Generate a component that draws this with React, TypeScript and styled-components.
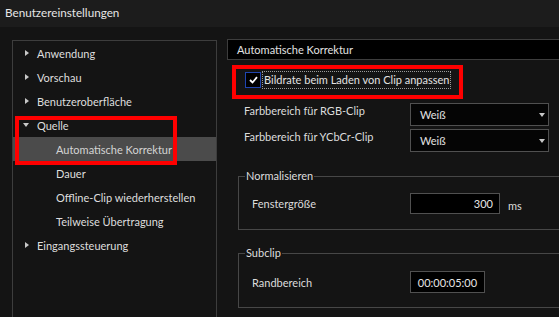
import React from 'react';
import styled, { createGlobalStyle } from 'styled-components';

const Global = createGlobalStyle`
  html, body { margin: 0; padding: 0; background: #141414; }
  body {
    font-family: Lato, "Noto Sans", sans-serif;
    font-size: 11px;
    color: #dcdcdc;
    overflow: hidden;
  }
  * { box-sizing: border-box; }
`;

const Window = styled.div`
  width: 559px;
  height: 317px;
  display: flex;
  flex-direction: column;
  overflow: hidden;
  background: #141414;
`;

const TitleBar = styled.div`
  height: 27px;
  flex: none;
  background: #1c1c1c;
  display: flex;
  align-items: center;
  padding: 0 0 4px 5px;
  color: #e6e6e6;
  font-size: 11.7px;
`;

const Body = styled.div`
  flex: 1;
  display: flex;
  gap: 10px;
  padding: 12px 0 0 12px;
  min-height: 0;
`;

const Sidebar = styled.nav`
  position: relative;
  flex: none;
  width: 205px;
  height: 300px;
  margin-top: 1px;
  border: 1px solid #3d3d3d;
`;

const TreeRow = styled.div<{ $level: number; $selected?: boolean }>`
  height: 24px;
  display: flex;
  align-items: center;
  gap: 8px;
  padding-left: ${p => (p.$level === 0 ? 12 : 43)}px;
  background: ${p => (p.$selected ? '#4b4b4b' : 'transparent')};
  color: ${p => (p.$selected ? '#d4d4d4' : '#dedede')};
  white-space: nowrap;
`;

const Arrow = styled.span<{ $open?: boolean }>`
  width: 4px;
  display: inline-flex;
  justify-content: center;
  &::before {
    content: '';
    display: block;
    border-style: solid;
    border-color: transparent;
    ${p =>
      p.$open
        ? 'border-width: 4px 3.5px 0 3.5px; border-top-color: #c8c8c8; margin-left: -2px;'
        : 'border-width: 3.5px 0 3.5px 4px; border-left-color: #c8c8c8;'}
  }
`;

const Highlight = styled.div<{ $l: number; $t: number; $w: number; $h: number }>`
  position: absolute;
  left: ${p => p.$l}px;
  top: ${p => p.$t}px;
  width: ${p => p.$w}px;
  height: ${p => p.$h}px;
  border: 4px solid #ff0000;
  pointer-events: none;
`;

const Content = styled.section`
  position: relative;
  flex: 1;
  min-width: 0;
  overflow: hidden;
  display: flex;
  flex-direction: column;
`;

const Header = styled.div`
  height: 21px;
  flex: none;
  background: #000;
  border: 1px solid #3d3d3d;
  border-right: none;
  display: flex;
  align-items: center;
  padding-left: 9px;
  color: #e2e2e2;
`;

const CheckRow = styled.label`
  margin-top: 9px;
  height: 22px;
  display: flex;
  align-items: center;
  gap: 2px;
  padding-left: 18px;
`;

const CheckBox = styled.span`
  width: 16px;
  height: 16px;
  border: 1px solid #1f45b0;
  background: #000;
  display: inline-flex;
  align-items: center;
  justify-content: center;
`;

const CheckLabel = styled.span`
  outline: 1px dotted #9a9a9a;
  padding: 0 1px;
  line-height: 16px;
  color: #e2e2e2;
  white-space: nowrap;
`;

const FormGrid = styled.div`
  margin-top: 12px;
  padding-left: 17px;
  display: grid;
  grid-template-columns: 166px 139px;
  row-gap: 3px;
`;

const FieldLabel = styled.span`
  padding-top: 1px;
  white-space: nowrap;
`;

const Select = styled.div`
  height: 23px;
  background: #050505;
  border: 1px solid #505050;
  display: flex;
  align-items: center;
  justify-content: space-between;
  padding: 0 3px 0 9px;
  color: #e2e2e2;
  &::after {
    content: '';
    border-style: solid;
    border-color: #c8c8c8 transparent transparent transparent;
    border-width: 4px 3.5px 0 3.5px;
    margin-top: 1px;
  }
`;

const Group = styled.fieldset<{ $mt: number }>`
  margin: ${p => p.$mt}px 0 0 11px;
  width: 340px;
  flex: none;
  border: 1px solid #474747;
  padding: 0 0 0 6px;
`;

const Legend = styled.legend`
  padding: 0 1px;
  line-height: 16px;
  color: #dedede;
`;

const GroupRow = styled.div<{ $pt: number; $pb: number }>`
  display: grid;
  grid-template-columns: 158px auto auto;
  justify-content: start;
  align-items: center;
  padding: ${p => p.$pt}px 0 ${p => p.$pb}px 7px;
`;

const TextInput = styled.div<{ $w: number; $h: number; $align: 'right' | 'center' }>`
  width: ${p => p.$w}px;
  height: ${p => p.$h}px;
  background: #000;
  border: 1px solid #505050;
  display: flex;
  align-items: center;
  justify-content: ${p => (p.$align === 'right' ? 'flex-end' : 'center')};
  padding: 0 6px;
  color: #e6e6e6;
`;

const Unit = styled.span`
  color: #dcdcdc;
  padding-top: 3px;
  margin-left: 8px;
`;

const tree: { label: string; level: number; open?: boolean; selected?: boolean }[] = [
  { label: 'Anwendung', level: 0 },
  { label: 'Vorschau', level: 0 },
  { label: 'Benutzeroberfläche', level: 0 },
  { label: 'Quelle', level: 0, open: true },
  { label: 'Automatische Korrektur', level: 1, selected: true },
  { label: 'Dauer', level: 1 },
  { label: 'Offline-Clip wiederherstellen', level: 1 },
  { label: 'Teilweise Übertragung', level: 1 },
  { label: 'Eingangssteuerung', level: 0 },
];

export default function App() {
  return (
    <Window>
      <Global />
      <TitleBar>Benutzereinstellungen</TitleBar>
      <Body>
        <Sidebar>
          {tree.map(item => (
            <TreeRow key={item.label} $level={item.level} $selected={item.selected}>
              {item.level === 0 && <Arrow $open={item.open} />}
              <span>{item.label}</span>
            </TreeRow>
          ))}
          <Highlight $l={2} $t={75} $w={162} $h={49} />
        </Sidebar>
        <Content>
          <Header>Automatische Korrektur</Header>
          <CheckRow>
            <CheckBox>
              <svg width="9" height="8" viewBox="0 0 9 8">
                <path d="M1 4 L3.5 6.5 L8 1.2" fill="none" stroke="#ffffff" strokeWidth="1.8" />
              </svg>
            </CheckBox>
            <CheckLabel>Bildrate beim Laden von Clip anpassen</CheckLabel>
          </CheckRow>
          <FormGrid>
            <FieldLabel>Farbbereich für RGB-Clip</FieldLabel>
            <Select>Weiß</Select>
            <FieldLabel>Farbbereich für YCbCr-Clip</FieldLabel>
            <Select>Weiß</Select>
          </FormGrid>
          <Group $mt={16}>
            <Legend>Normalisieren</Legend>
            <GroupRow $pt={9} $pb={15}>
              <span>Fenstergröße</span>
              <TextInput $w={90} $h={21} $align="right">300</TextInput>
              <Unit>ms</Unit>
            </GroupRow>
          </Group>
          <Group $mt={15}>
            <Legend>Subclip</Legend>
            <GroupRow $pt={10} $pb={14}>
              <span>Randbereich</span>
              <TextInput $w={75} $h={22} $align="center">00:00:05:00</TextInput>
            </GroupRow>
          </Group>
          <Highlight $l={5} $t={26} $w={231} $h={34} />
        </Content>
      </Body>
    </Window>
  );
}
